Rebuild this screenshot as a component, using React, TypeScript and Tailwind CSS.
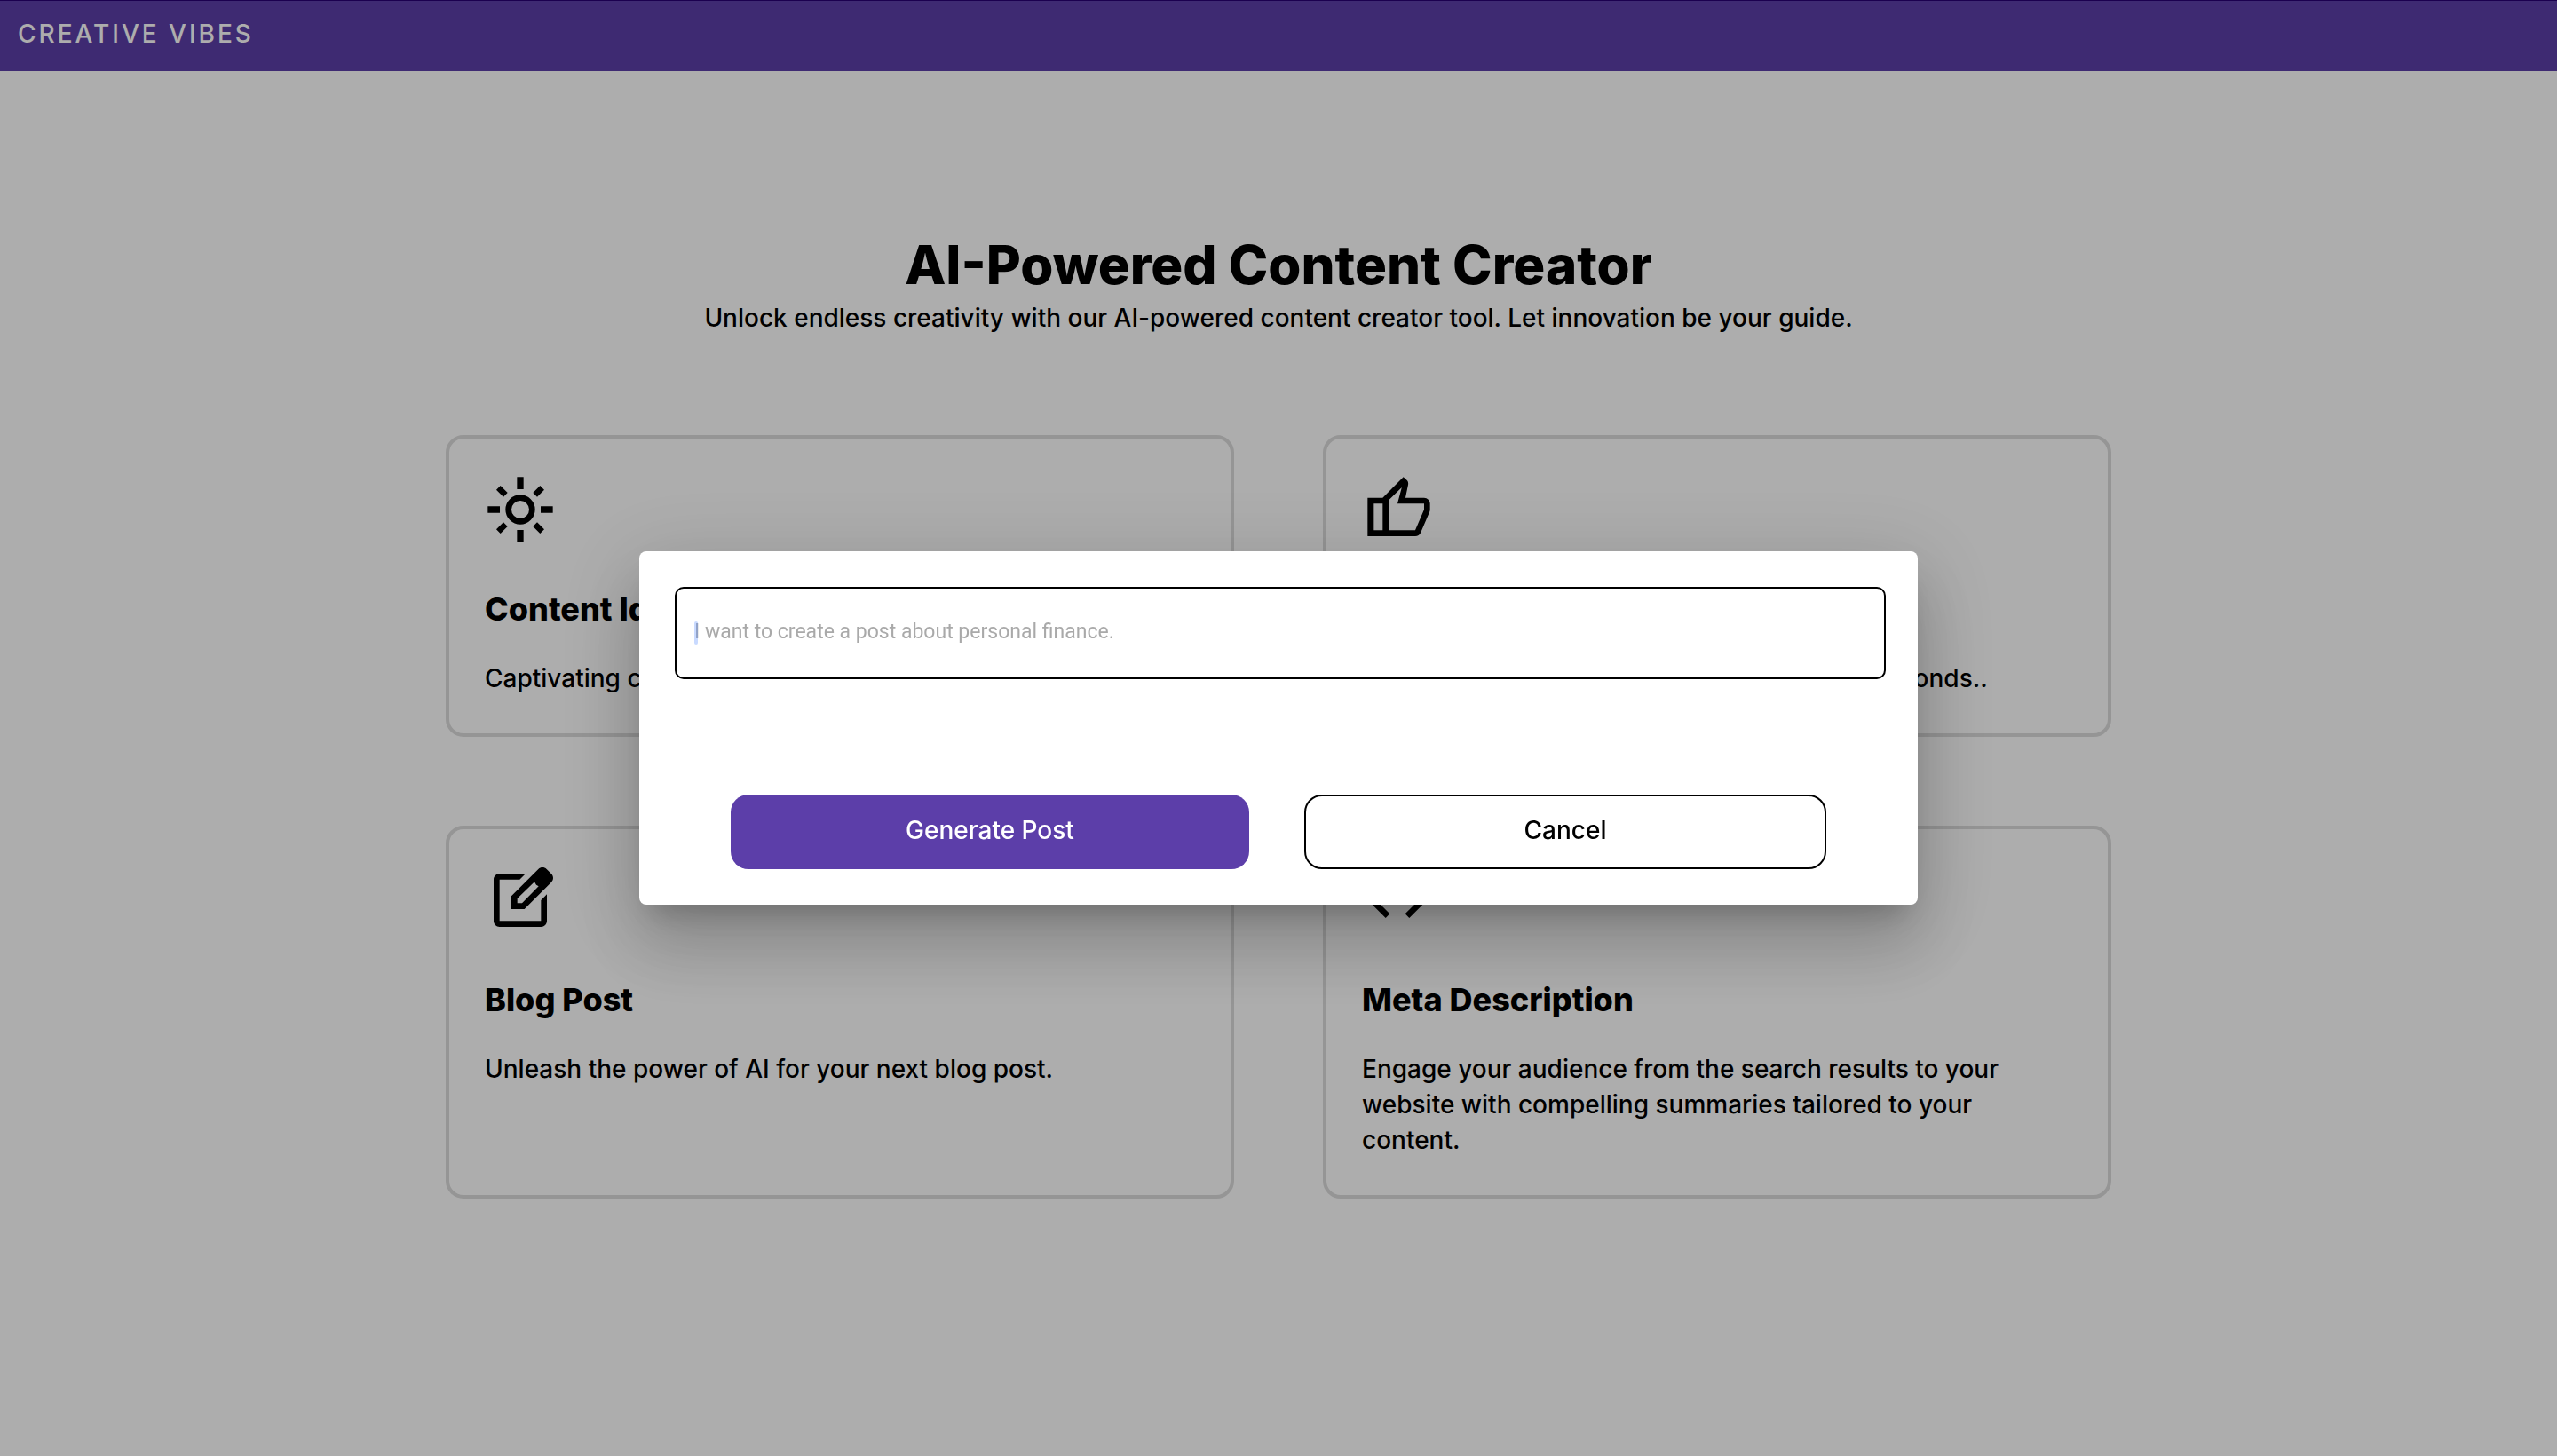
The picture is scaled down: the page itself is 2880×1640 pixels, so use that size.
import type { ReactNode } from "react";

function Icon({ children }: { children: ReactNode }) {
  return (
    <svg viewBox="0 0 24 24" className="size-20" fill="currentColor" fillRule="evenodd" aria-hidden="true">
      {children}
    </svg>
  );
}

const SunIcon = () => (
  <Icon>
    <path d="M12 7a5 5 0 1 0 0 10 5 5 0 0 0 0-10zm0 2a3 3 0 1 1 0 6 3 3 0 0 1 0-6z" />
    <path d="M10.9 1h2.2v4.1h-2.2zM10.9 18.9h2.2V23h-2.2zM1 10.9h4.1v2.2H1zM18.9 10.9H23v2.2h-4.1z" />
    <path d="M5.3 3.9 3.9 5.3l2.4 2.4 1.4-1.4zM18.7 3.9l1.4 1.4-2.4 2.4-1.4-1.4zM5.3 20.1l-1.4-1.4 2.4-2.4 1.4 1.4zM18.7 20.1l1.4-1.4-2.4-2.4-1.4 1.4z" />
  </Icon>
);

const ThumbIcon = () => (
  <Icon>
    <path d="M1.9 8H7L14 .95l1.15 1.1c.4.4.58.95.47 1.5L14.69 8H21c1.1 0 2 .9 2 2v2c0 .26-.05.5-.14.73l-3.02 7.05C19.54 20.5 18.83 21 18 21H1.9zM4 10v9h3v-9zm5-1.15V19h9l3-7v-2h-9l1.45-5.5z" />
  </Icon>
);

const EditIcon = () => (
  <Icon>
    <path d="M5 3h8.8l-2 2H5v14h14v-7l2-2v9c0 1.1-.9 2-2 2H5c-1.1 0-2-.9-2-2V5c0-1.1.9-2 2-2z" />
    <path d="M9 15v-4.4l9.1-9.1c.8-.8 2-.8 2.8 0l1.6 1.6c.8.8.8 2 0 2.8L13.4 15zm2-2h1.6l5.6-5.7-.8-.5-.6-1-5.8 5.6z" />
  </Icon>
);

const CodeIcon = () => (
  <Icon>
    <path d="M9.4 16.6 4.8 12l4.6-4.6L8 6l-6 6 6 6zM14.6 16.6l4.6-4.6-4.6-4.6L16 6l6 6-6 6z" />
  </Icon>
);

const cards = [
  { icon: <SunIcon />, title: "Content Ideas", text: "Captivating content ideas in seconds." },
  { icon: <ThumbIcon />, title: "Social Media", text: "Generate captivating social media posts in seconds.." },
  { icon: <EditIcon />, title: "Blog Post", text: "Unleash the power of AI for your next blog post." },
  {
    icon: <CodeIcon />,
    title: "Meta Description",
    text: "Engage your audience from the search results to your website with compelling summaries tailored to your content.",
  },
];

export default function App() {
  return (
    <div className="min-h-screen bg-white font-['Inter',sans-serif] text-[28px] leading-10 font-medium text-black">
      <header className="flex h-20 items-center border-t border-[#290075] bg-[#5c3ea9] px-5 pb-1.5 tracking-[3px] text-white">
        CREATIVE VIBES
      </header>

      <main className="mx-auto w-[1876px] max-w-full pt-45">
        <div className="text-center">
          <h1 className="text-[60px] leading-[76px] font-extrabold">AI-Powered Content Creator</h1>
          <p className="mt-0.5">
            Unlock endless creativity with our AI-powered content creator tool. Let innovation be your guide.
          </p>
        </div>
        <div className="mt-28 grid grid-cols-2 gap-[100px]">
          {cards.map((card) => (
            <article key={card.title} className="rounded-[20px] border-4 border-[#dcdcdc] p-10 pb-[42px]">
              {card.icon}
              <h2 className="mt-[50px] text-4xl leading-11 font-extrabold">{card.title}</h2>
              <p className="mt-9">{card.text}</p>
            </article>
          ))}
        </div>
      </main>

      <div className="fixed inset-0 flex items-center justify-center bg-black/32">
        <form
          role="dialog"
          aria-modal="true"
          aria-label="Generate post"
          onSubmit={(e) => e.preventDefault()}
          className="w-1/2 rounded-lg bg-white p-10 shadow-[0_22px_30px_-14px_rgba(0,0,0,0.2),0_48px_76px_6px_rgba(0,0,0,0.14),0_18px_92px_16px_rgba(0,0,0,0.12)]"
        >
          <div className="relative -mr-1 flex">
            <input
              type="text"
              aria-label="Post topic"
              placeholder="I want to create a post about personal finance."
              className="h-[104px] w-full rounded-[10px] border-2 border-black px-5 pb-1 font-['Roboto',sans-serif] text-[23px] font-normal outline-none placeholder:text-[#a9a9a9]"
            />
            <span className="pointer-events-none absolute top-[39px] left-[22px] h-[26px] w-1 rounded-full bg-[#6496ff]/35" />
          </div>
          <div className="mt-[130px] grid grid-cols-[146fr_147fr] gap-[62px] px-[63px]">
            <button type="submit" className="h-21 rounded-[20px] bg-[#5c3ea9] pb-1 text-white">
              Generate Post
            </button>
            <button type="button" className="h-21 rounded-[20px] border-2 border-black pb-1">
              Cancel
            </button>
          </div>
        </form>
      </div>
    </div>
  );
}
